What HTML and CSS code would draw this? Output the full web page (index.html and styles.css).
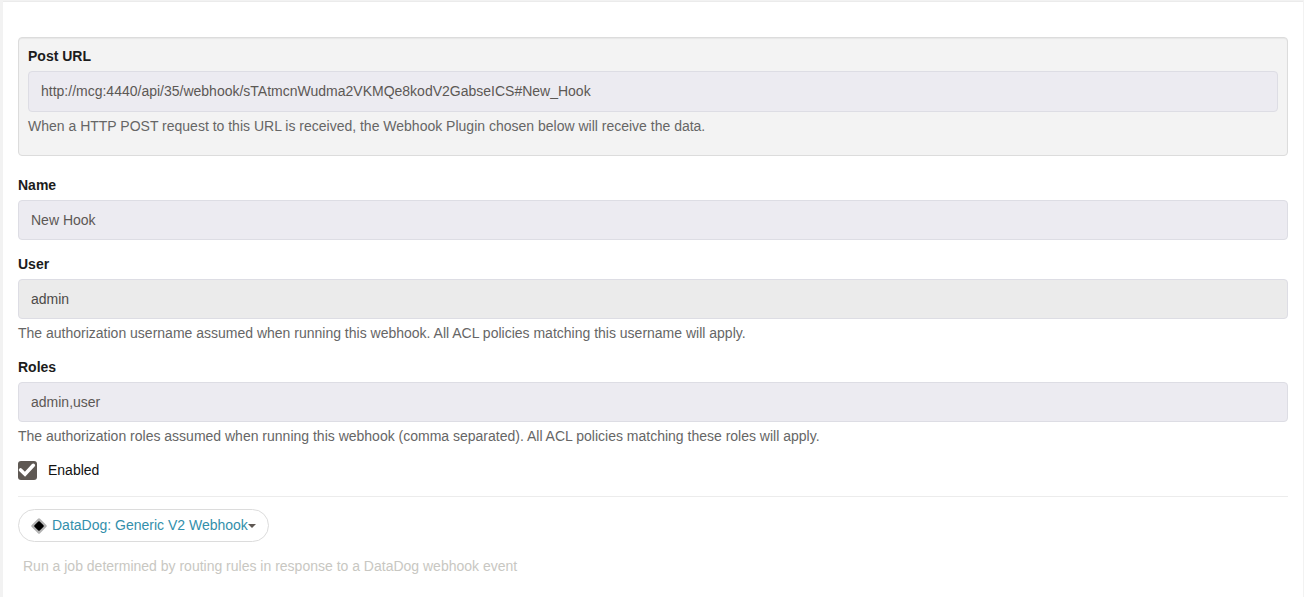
FILE: index.html
```html
<!DOCTYPE html>
<html lang="en">
<head>
<meta charset="utf-8">
<title>Webhook</title>
<link rel="stylesheet" href="styles.css">
</head>
<body>
<main class="panel">
  <form class="form">
    <div class="well">
      <label class="label" for="url">Post URL</label>
      <input class="control control-tall" id="url" type="text" value="http://mcg:4440/api/35/webhook/sTAtmcnWudma2VKMQe8kodV2GabseICS#New_Hook">
      <p class="help">When a HTTP POST request to this URL is received, the Webhook Plugin chosen below will receive the data.</p>
    </div>
    <div class="group">
      <label class="label" for="name">Name</label>
      <input class="control" id="name" type="text" value="New Hook">
    </div>
    <div class="group">
      <label class="label" for="user">User</label>
      <input class="control control-readonly" id="user" type="text" value="admin" readonly>
      <p class="help">The authorization username assumed when running this webhook. All ACL policies matching this username will apply.</p>
    </div>
    <div class="group">
      <label class="label" for="roles">Roles</label>
      <input class="control" id="roles" type="text" value="admin,user">
      <p class="help">The authorization roles assumed when running this webhook (comma separated). All ACL policies matching these roles will apply.</p>
    </div>
    <div class="check">
      <span class="check-box">
        <input class="check-input" id="enabled" type="checkbox" checked>
        <svg class="check-mark" viewBox="0 0 19 19" aria-hidden="true"><path d="M2.6 9 7 13.2 15.3 4.3" fill="none" stroke="#fff" stroke-width="3.6" stroke-linecap="round"/></svg>
      </span>
      <label for="enabled">Enabled</label>
    </div>
    <div class="plugin">
      <button class="picker" type="button">
        <svg class="picker-icon" viewBox="0 0 16 16" aria-hidden="true"><path d="M8 1.8 14.2 8 8 14.2 1.8 8Z" fill="#b3b3b3" stroke="#b3b3b3" stroke-width="3" stroke-linejoin="round"/><path d="M8 4.2 11.8 8 8 11.8 4.2 8Z" fill="#000" stroke="#000" stroke-width="2" stroke-linejoin="round"/></svg>
        <span class="picker-name">DataDog: Generic V2 Webhook</span>
        <span class="caret"></span>
      </button>
      <p class="plugin-note">Run a job determined by routing rules in response to a DataDog webhook event</p>
    </div>
  </form>
</main>
</body>
</html>
```
FILE: styles.css
```css
* {
  box-sizing: border-box;
}

html {
  height: 100%;
}

body {
  display: flex;
  min-height: 100%;
  margin: 0;
  padding: 1px 1px 0 3px;
  background: #f2f2f2;
  color: #111;
  font: 14px/20px "Liberation Sans", Arial, sans-serif;
}

.panel {
  flex: 1;
  padding: 35px 15px 20px;
  border-top: 1px solid #ebebeb;
  background: #fff;
}

.well {
  margin-bottom: 19px;
  padding: 8px 9px 19px;
  border: 1px solid #dcdcdc;
  border-radius: 4px;
  background: #f3f3f3;
  box-shadow: inset 0 1px 1px rgba(0, 0, 0, 0.05);
}

.group {
  margin-bottom: 14px;
}

.label {
  display: block;
  margin-bottom: 5px;
  color: #1c1c1c;
  font-weight: bold;
}

.control {
  display: block;
  width: 100%;
  height: 40px;
  padding: 0 12px;
  border: 1px solid #dddde4;
  border-radius: 4px;
  background: #ecebf1;
  color: #5c5855;
  font: inherit;
}

.control-tall {
  height: 41px;
  padding-bottom: 1px;
}

.control-readonly {
  background: #ebebeb;
  color: #4c4a48;
}

.help {
  margin: 4px 0 0;
  color: #666;
}

.check {
  display: flex;
  align-items: center;
  gap: 11px;
}

.check-box {
  display: grid;
  width: 19px;
  height: 19px;
}

.check-input,
.check-mark {
  grid-area: 1 / 1;
  width: 19px;
  height: 19px;
}

.check-input {
  margin: 0;
  border-radius: 3px;
  background: #5e5853;
  appearance: none;
}

.check-mark {
  pointer-events: none;
}

.plugin {
  margin-top: 16px;
  padding-top: 12px;
  border-top: 1px solid #ececec;
}

.picker {
  display: flex;
  align-items: center;
  height: 33px;
  padding: 0 12px;
  border: 1px solid #dcdcdc;
  border-radius: 17px;
  background: #fff;
  color: #338fab;
  font: inherit;
}

.picker-icon {
  width: 16px;
  height: 16px;
  margin-right: 5px;
}

.picker-name {
  padding-bottom: 1px;
}

.caret {
  border: 4px solid transparent;
  border-top-color: #5e5853;
  border-bottom: 0;
}

.plugin-note {
  margin: 14px 5px 0;
  color: #c8c7c2;
}
```
